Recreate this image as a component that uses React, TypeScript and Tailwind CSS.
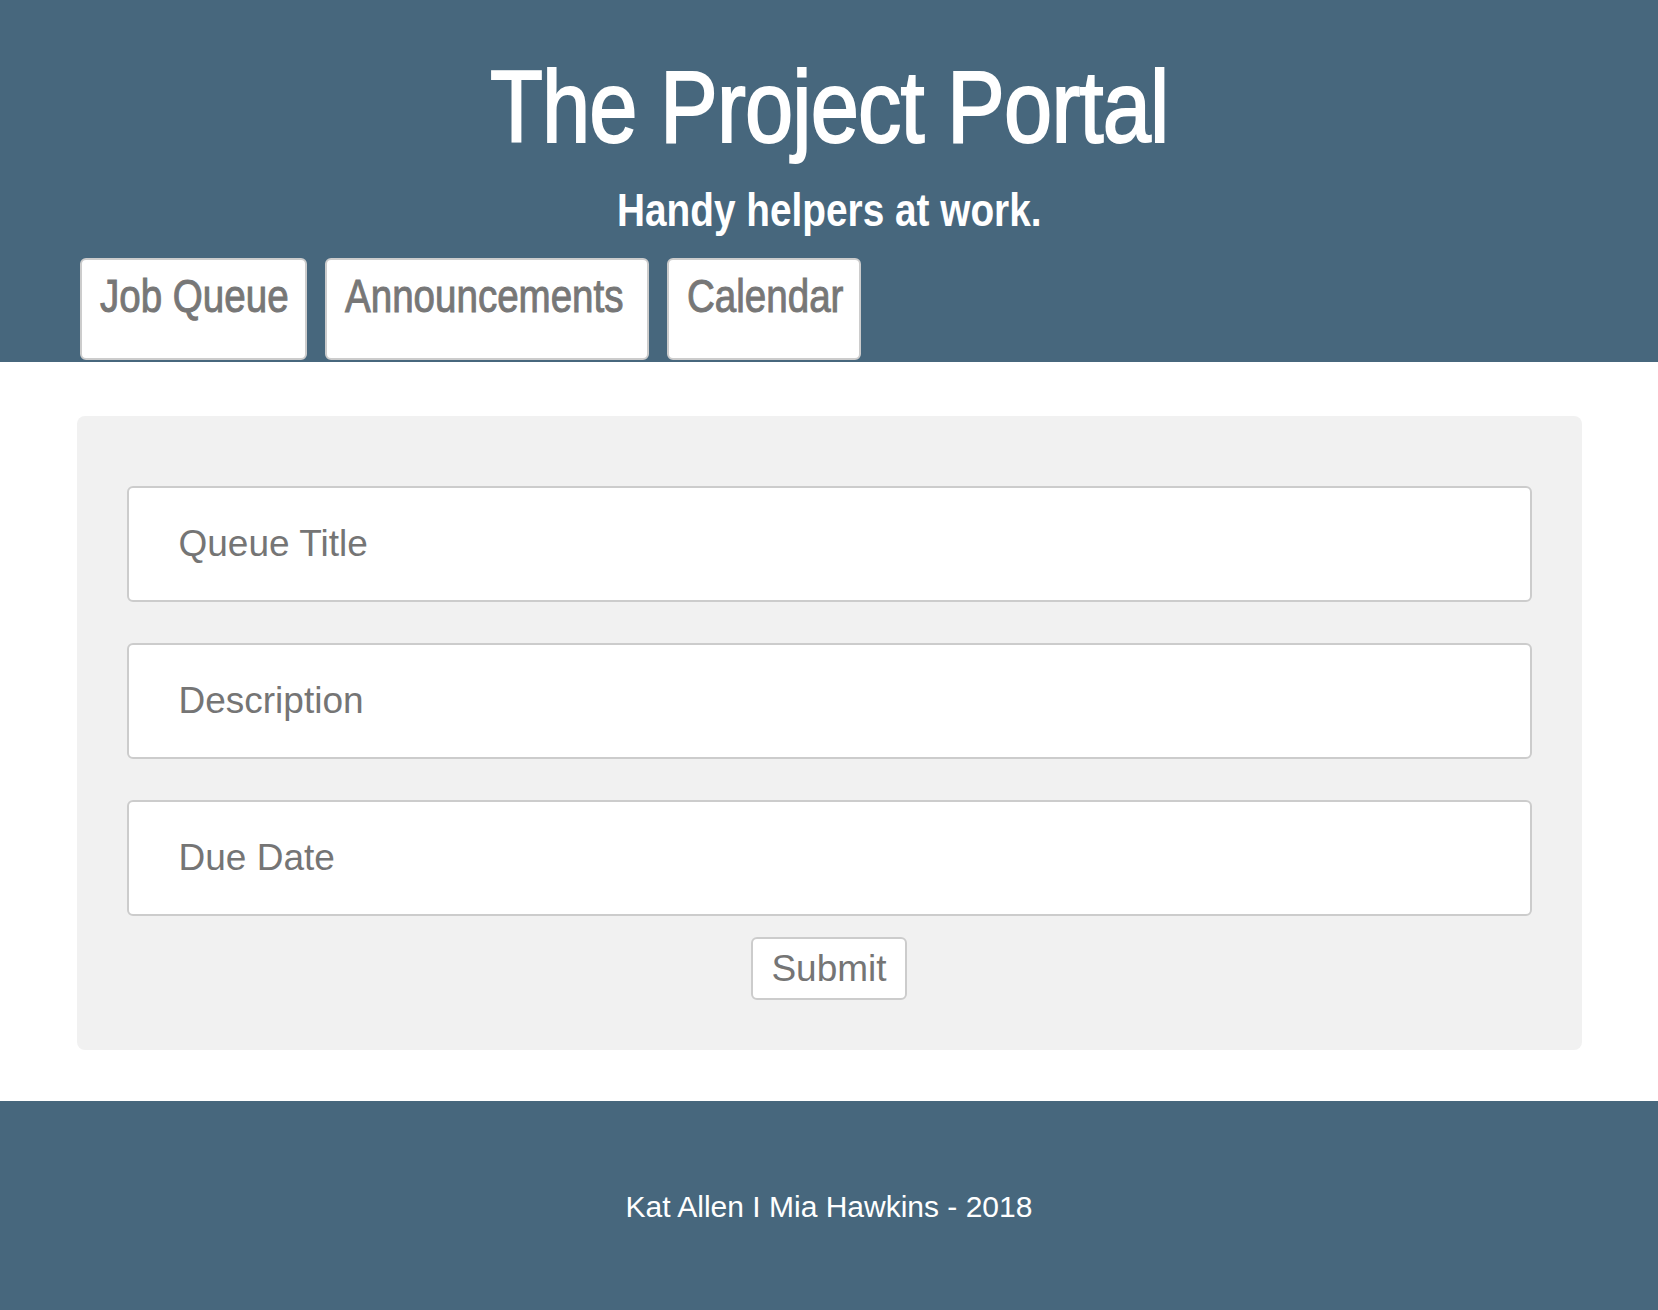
const tabs = [
  { label: 'Job Queue', width: 'w-[227px]' },
  { label: 'Announcements', width: 'w-[324px]' },
  { label: 'Calendar', width: 'w-[194px]' },
];
const fields = ['Queue Title', 'Description', 'Due Date'];

export default function App() {
  return (
    <div className="min-h-screen bg-white font-['Liberation_Sans',Arial,sans-serif]">
      {/* Header */}
      <header className="flex h-[362px] flex-col bg-[#47677d]">
        <h1 className="pt-[56px] text-center text-[102px] leading-[102px] font-normal tracking-[-1px] text-white [-webkit-text-stroke:2px_white]">
          <span className="inline-block scale-x-[0.85] whitespace-nowrap">The Project Portal</span>
        </h1>
        <h2 className="mt-[28px] text-center text-[47px] leading-[47px] font-bold text-white">
          <span className="inline-block scale-x-[0.825] whitespace-nowrap">Handy helpers at work.</span>
        </h2>
        <nav className="mt-[25px] flex gap-[18px] pl-[80px]">
          {tabs.map((tab) => (
            <button
              key={tab.label}
              className={`${tab.width} flex h-[102px] items-start overflow-hidden rounded-md border-2 border-[#cccccc] bg-white px-[18px] pt-[12px] text-[47px] leading-[47px] text-[#777777] [-webkit-text-stroke:1px_#777777]`}
            >
              <span className="inline-block origin-left scale-x-[0.82] whitespace-nowrap">{tab.label}</span>
            </button>
          ))}
        </nav>
      </header>

      {/* Form */}
      <main className="pt-[54px] pb-[51px]">
        <form className="mx-auto flex w-[1505px] flex-col rounded-lg bg-[#f1f1f1] px-[50px] pt-[70px] pb-[50px]">
          <div className="flex flex-col gap-[41px]">
            {fields.map((field) => (
              <input
                key={field}
                type="text"
                placeholder={field}
                className="h-[116px] w-full rounded-md border-2 border-[#cccccc] bg-white px-[50px] text-[37px] text-[#757575] outline-none placeholder:text-[#757575]"
              />
            ))}
          </div>
          <div className="mt-[21px] flex justify-center">
            <button
              type="button"
              className="h-[63px] w-[156px] rounded-md border-2 border-[#cccccc] bg-white text-[37px] leading-none text-[#757575]"
            >
              Submit
            </button>
          </div>
        </form>
      </main>

      {/* Footer */}
      <footer className="flex h-[210px] items-center justify-center bg-[#47677d]">
        <p className="text-[30px] text-white">Kat Allen I Mia Hawkins - 2018</p>
      </footer>
    </div>
  );
}
